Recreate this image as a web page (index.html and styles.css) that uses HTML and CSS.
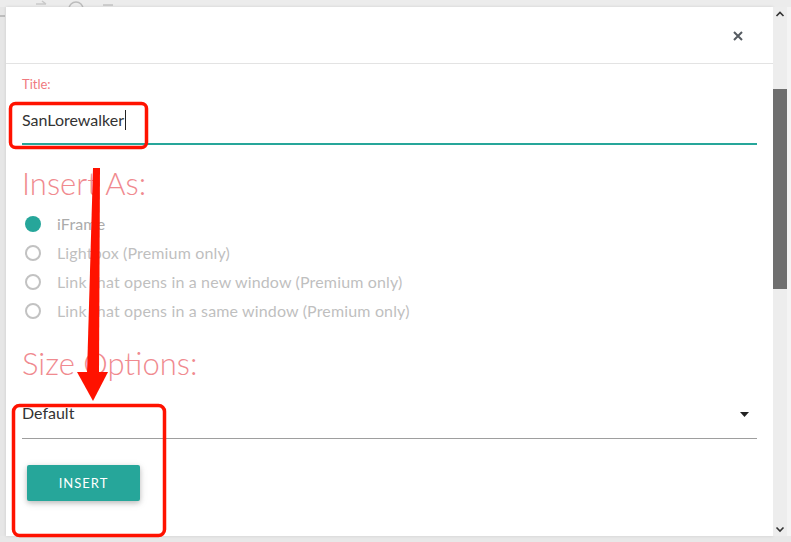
FILE: index.html
```html
<!DOCTYPE html>
<html>
<head>
<meta charset="utf-8">
<link rel="stylesheet" href="styles.css">
</head>
<body>
<div class="topstrip">
  <svg class="tb-icons" width="200" height="7" viewBox="0 0 200 7">
    <path d="M36 4 L46 4 M42 1 L46 4" stroke="#c9c9c9" stroke-width="1.5" fill="none"/>
    <circle cx="76" cy="9" r="7" stroke="#bcbcbc" stroke-width="1.5" fill="none"/>
    <path d="M103 5 L113 5" stroke="#c4c4c4" stroke-width="1.5"/>
  </svg>
</div>
<div class="stage">
  <div class="gutter"><span class="gutter-mark"></span></div>
  <div class="modal">
    <div class="modal-header">
      <svg class="close" width="10" height="10" viewBox="0 0 10 10">
        <path d="M1 1 L9 9 M9 1 L1 9" stroke="#555b61" stroke-width="2" fill="none"/>
      </svg>
    </div>
    <div class="modal-body">
      <label class="field-label">Title:</label>
      <div class="text-input"><span class="value">SanLorewalker</span><span class="caret"></span></div>

      <h2 class="section-title">Insert As:</h2>
      <ul class="radios">
        <li class="radio checked"><span class="dot"></span><span class="rlabel">iFrame</span></li>
        <li class="radio"><span class="dot"></span><span class="rlabel">Lightbox (Premium only)</span></li>
        <li class="radio"><span class="dot"></span><span class="rlabel">Link that opens in a new window (Premium only)</span></li>
        <li class="radio"><span class="dot"></span><span class="rlabel">Link that opens in a same window (Premium only)</span></li>
      </ul>

      <h2 class="section-title size-title">Size Options:</h2>
      <div class="select">
        <span class="select-value">Default</span>
        <svg class="caret-down" width="9" height="5" viewBox="0 0 9 5"><path d="M0 0 L9 0 L4.5 5 Z" fill="#222"/></svg>
      </div>

      <button class="btn">INSERT</button>
    </div>
  </div>
  <div class="scrollbar">
    <svg class="sb-arrow" width="14" height="14" viewBox="0 0 14 14"><path d="M3.5 9 L7 5.5 L10.5 9" stroke="#333" stroke-width="1.6" fill="none"/></svg>
    <div class="sb-track"><div class="sb-thumb"></div></div>
    <svg class="sb-arrow" width="14" height="14" viewBox="0 0 14 14"><path d="M3.5 5.5 L7 9 L10.5 5.5" stroke="#333" stroke-width="1.6" fill="none"/></svg>
  </div>
  <div class="sliver"></div>
</div>
<div class="bottomstrip"></div>

<svg class="annotations" width="791" height="542" viewBox="0 0 791 542">
  <rect x="10.5" y="103.5" width="136" height="44" rx="5" ry="5" fill="none" stroke="#ff1200" stroke-width="3.5"/>
  <rect x="13.5" y="405.5" width="151" height="130" rx="6" ry="6" fill="none" stroke="#ff1200" stroke-width="3.5"/>
  <polygon points="93,168 100,168 99,374 87,374" fill="#ff1200"/>
  <polygon points="77,372 108,372 93,401" fill="#ff1200"/>
</svg>
</body>
</html>
```
FILE: styles.css
```css
html, body {
  margin: 0;
  padding: 0;
}
body {
  width: 791px;
  height: 542px;
  overflow: hidden;
  background: #e4e4e4;
  font-family: "Lato", "Open Sans", sans-serif;
  position: relative;
}
.topstrip {
  height: 7px;
  background: #ececec;
  overflow: hidden;
}
.tb-icons { display: block; }
.stage {
  display: flex;
  height: 529px;
}
.gutter {
  width: 6px;
  background: #e6e6e6;
  padding-top: 8px;
  box-sizing: border-box;
}
.gutter-mark {
  display: block;
  width: 5px;
  height: 2px;
  background: #bdbdbd;
}
.modal {
  width: 767px;
  background: #fff;
  display: flex;
  flex-direction: column;
  box-shadow: 0 0 3px rgba(0,0,0,0.12);
}
.modal-header {
  height: 56px;
  border-bottom: 1px solid #e3e3e3;
  display: flex;
  align-items: center;
  justify-content: flex-end;
  padding-right: 30px;
  flex-shrink: 0;
}
.close { display: block; margin-top: 2px; }
.modal-body {
  padding: 0 16px;
}
.field-label {
  display: block;
  margin-top: 12px;
  font-size: 13px;
  line-height: 16px;
  color: #f07a80;
}
.text-input {
  margin-top: 18px;
  height: 33px;
  border-bottom: 2px solid #26a69a;
  display: flex;
  align-items: flex-start;
  font-size: 16px;
  line-height: 20px;
  color: #333;
}
.caret {
  display: inline-block;
  width: 1px;
  height: 20px;
  background: #222;
  margin-left: 1px;
}
.section-title {
  margin: 20px 0 0;
  font-weight: 300;
  font-size: 31px;
  line-height: 36px;
  color: #f08a8f;
}
.radios {
  list-style: none;
  margin: 8px 0 0;
  padding: 0;
}
.radio {
  display: flex;
  align-items: center;
  height: 29px;
}
.dot {
  width: 16px;
  height: 16px;
  box-sizing: border-box;
  border: 2px solid #c2c2c2;
  border-radius: 50%;
  margin-left: 3px;
  margin-right: 16px;
}
.radio.checked .dot {
  border: none;
  background: #26a69a;
}
.rlabel {
  font-size: 16px;
  letter-spacing: 0.15px;
  color: #bfbfbf;
}
.radio.checked .rlabel { color: #ababab; }
.size-title {
  margin-top: 20px;
}
.select {
  margin-top: 22px;
  height: 35px;
  border-bottom: 1px solid #9e9e9e;
  display: flex;
  justify-content: space-between;
  align-items: flex-start;
  font-size: 16px;
  line-height: 20px;
  color: #333;
}
.caret-down { margin-top: 9px; margin-right: 8px; }
.btn {
  display: block;
  margin: 26px 0 0 5px;
  width: 113px;
  height: 36px;
  border: none;
  border-radius: 2px;
  background: #26a69a;
  color: #fff;
  font-family: "Lato", "Open Sans", sans-serif;
  font-size: 13px;
  letter-spacing: 1px;
  box-shadow: 0 2px 5px rgba(0,0,0,0.2), 0 2px 10px rgba(0,0,0,0.1);
}
.scrollbar {
  width: 14px;
  background: #ededed;
  display: flex;
  flex-direction: column;
}
.sb-arrow { display: block; flex-shrink: 0; }
.sb-track {
  flex: 1;
  padding-top: 68px;
}
.sb-thumb {
  height: 200px;
  background: #6f6f6f;
}
.sliver {
  width: 4px;
  background: #f4f4f4;
}
.bottomstrip {
  height: 6px;
  background: #e8e8e8;
}
.annotations {
  position: absolute;
  left: 0;
  top: 0;
  pointer-events: none;
}
```
